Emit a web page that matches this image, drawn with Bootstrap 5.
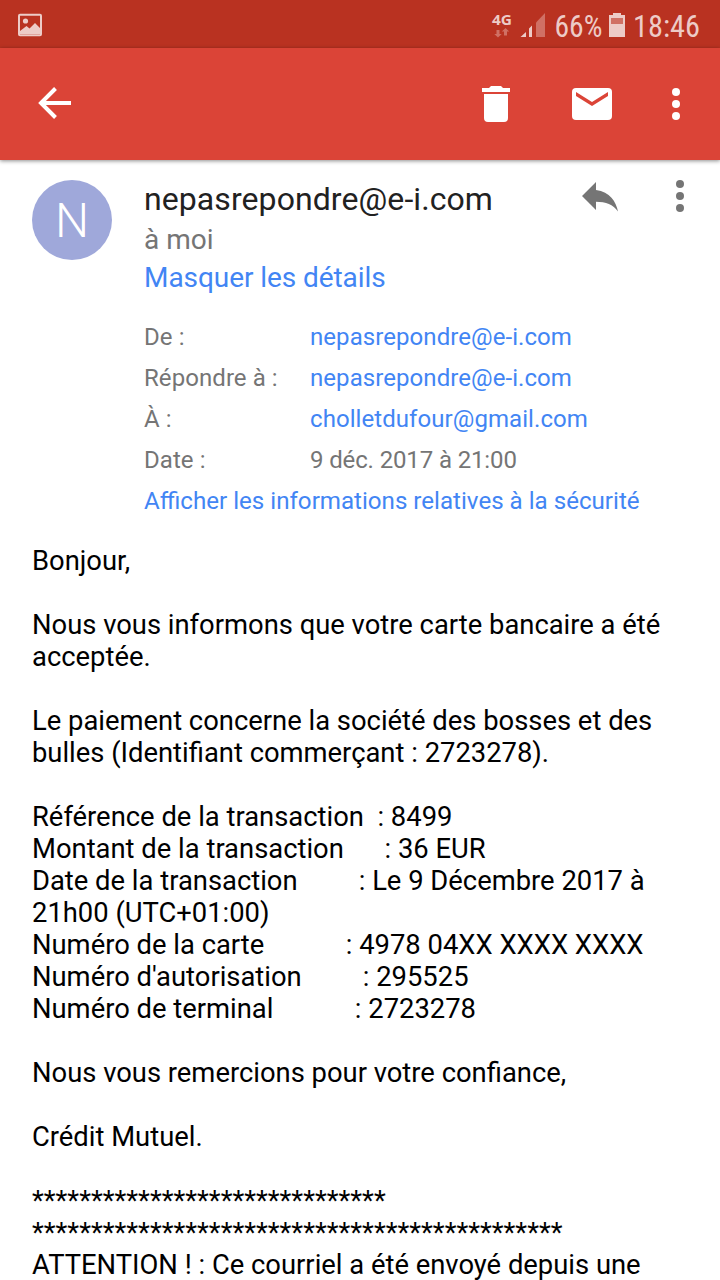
<!DOCTYPE html>
<html lang="fr">
<head>
<meta charset="utf-8">
<meta name="viewport" content="width=device-width, initial-scale=1">
<title>Message</title>
<link href="https://cdn.jsdelivr.net/npm/bootstrap@5.3.0/dist/css/bootstrap.min.css" rel="stylesheet">
<style>
body{font-family:Roboto,"Liberation Sans",sans-serif;background:#fff;color:#000;height:1280px;overflow:hidden}
svg{display:block;flex:none}
svg text{font-family:"Roboto Condensed",Roboto,sans-serif}
svg .network{font-family:"Noto Sans",sans-serif}
.statusbar{height:48px;background:#b93221}
.appbar{height:112px;background:#db4437;box-shadow:0 1px 4px rgba(0,0,0,.45)}
.msg-head{padding:20px 32px 0;height:157px}
.avatar{width:80px;height:80px;background:#9fa8da;color:#fff;font-size:48px;font-weight:300;line-height:1;margin-right:32px;padding-top:2px}
.sender{font-size:32px;line-height:38px;color:#212121;letter-spacing:.08px}
.recipient{font-size:28px;line-height:38px;color:#757575;margin-top:3px}
.link-mail{color:#4285f4;text-decoration:none}
.toggle-details{font-size:28px;line-height:38px;letter-spacing:-.07px}
.details{margin-left:144px;font-size:24px;line-height:41px;color:#757575;letter-spacing:.07px}
.details dt{width:166px;font-weight:400}
.date-value{letter-spacing:-.13px}
.security-link{font-size:24.13px;letter-spacing:0}
.mail-body{padding:23px 32px 0;font-size:27.38px;line-height:32px;white-space:pre}
</style>
</head>
<body>
<header>
<div class="statusbar d-flex justify-content-between">
<svg width="60" height="48" viewBox="0 0 60 48"><rect x="19" y="14.8" width="22" height="20.4" rx="1" fill="none" stroke="#edcbc7" stroke-width="2"/><circle cx="25.5" cy="21" r="2.6" fill="#edcbc7"/><path d="M20 31l6.500-5 3 2.500 5.500-5.500 5 5v6H20z" fill="#edcbc7"/></svg>
<svg width="240" height="48" viewBox="480 0 240 48" fill="#edcbc7">
<text class="network" x="492" y="25" font-size="14.5" font-weight="700" textLength="20" lengthAdjust="spacingAndGlyphs">4G</text>
<path d="M496.500 30h3v4h2.200l-3.700 3.500-3.700-3.500h2.200zM504 35.500h3v-4h2.200l-3.700-3.500-3.700 3.500h2.200z" fill="#d07064"/>
<path d="M520.500 37l5.500-5v5zM529 37V28.500l3-3V37z"/><path d="M536 37V22.500l9-9.500V37z" fill="#d07064"/>
<text x="554.500" y="36.500" font-size="31" textLength="48" lengthAdjust="spacingAndGlyphs">66%</text>
<path d="M613 13h8v2h4v22h-16V15h4z"/><path d="M611 18h12v6h-12z" fill="#d07064"/>
<text x="633" y="36.500" font-size="31" textLength="67" lengthAdjust="spacingAndGlyphs">18:46</text>
</svg>
</div>
<nav class="appbar position-relative d-flex justify-content-between">
<svg width="100" height="112" viewBox="0 48 100 112"><path d="M71 103H42M55.500 88.500L41 103l14.500 14.500" fill="none" stroke="#fff" stroke-width="4"/></svg>
<svg width="260" height="112" viewBox="460 48 260 112" fill="#fff">
<path d="M484 94h24v24a4 4 0 0 1-4 4h-16a4 4 0 0 1-4-4zM482 88h7l2-2h10l2 2h7v4h-28z"/>
<rect x="572" y="88" width="40" height="32" rx="4"/><path d="M576 92l16 10 16-10v4l-16 10-16-10z" fill="#db4437"/>
<circle cx="676" cy="92" r="4"/><circle cx="676" cy="104" r="4"/><circle cx="676" cy="116" r="4"/>
</svg>
</nav>
</header>
<main>
<section class="msg-head d-flex align-items-start">
<div class="avatar rounded-circle d-flex align-items-center justify-content-center flex-shrink-0">N</div>
<div class="flex-grow-1 text-nowrap">
<div class="sender">nepasrepondre@e-i.com</div>
<div class="recipient">à moi</div>
<a class="link-mail toggle-details d-block" href="#">Masquer les détails</a>
</div>
<svg width="108" height="34" viewBox="580 180 108 34" fill="#757575"><path d="M596 190V182l-14 14 14 14v-8.200c10 0 17 2.700 22 9.700-2-10-8-19.500-22-21.500z"/><circle cx="680" cy="184" r="4"/><circle cx="680" cy="196" r="4"/><circle cx="680" cy="208" r="4"/></svg>
</section>
<section class="details">
<dl class="mb-0">
<div class="d-flex"><dt>De :</dt><dd class="mb-0"><a class="link-mail" href="#">nepasrepondre@e-i.com</a></dd></div>
<div class="d-flex"><dt>Répondre à :</dt><dd class="mb-0"><a class="link-mail" href="#">nepasrepondre@e-i.com</a></dd></div>
<div class="d-flex"><dt>À :</dt><dd class="mb-0"><a class="link-mail" href="#">cholletdufour@gmail.com</a></dd></div>
<div class="d-flex"><dt>Date :</dt><dd class="date-value mb-0">9 déc. 2017 à 21:00</dd></div>
</dl>
<a class="link-mail security-link d-block text-nowrap" href="#">Afficher les informations relatives à la sécurité</a>
</section>
<article class="mail-body">Bonjour,

Nous vous informons que votre carte bancaire a été
acceptée.

Le paiement concerne la société des bosses et des
bulles (Identifiant commerçant : 2723278).

Référence de la transaction  : 8499
Montant de la transaction      : 36 EUR
Date de la transaction         : Le 9 Décembre 2017 à
21h00 (UTC+01:00)
Numéro de la carte            : 4978 04XX XXXX XXXX
Numéro d'autorisation         : 295525
Numéro de terminal            : 2723278

Nous vous remercions pour votre confiance,

Crédit Mutuel.

******************************
*********************************************
ATTENTION ! : Ce courriel a été envoyé depuis une</article>
</main>
<script src="https://cdn.jsdelivr.net/npm/bootstrap@5.3.0/dist/js/bootstrap.bundle.min.js"></script>
</body>
</html>
